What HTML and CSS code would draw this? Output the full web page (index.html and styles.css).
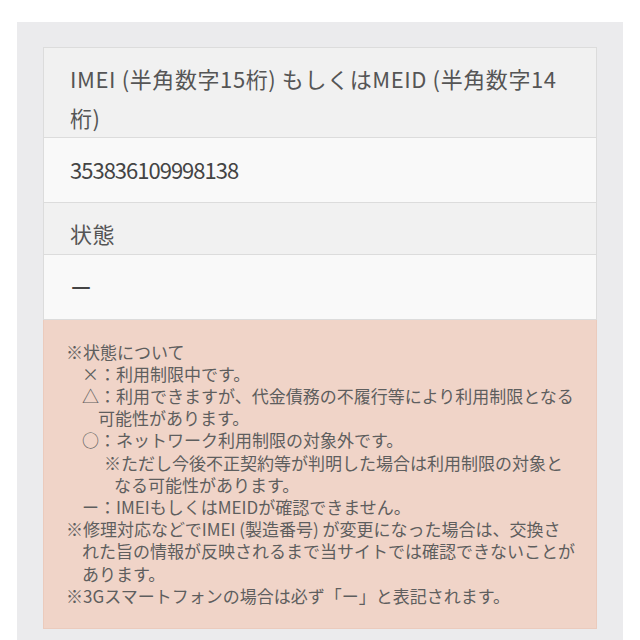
FILE: index.html
```html
<!DOCTYPE html>
<html lang="ja">
<head>
    <meta charset="UTF-8">
    <meta name="viewport" content="width=device-width, initial-scale=1.0">
    <title>ネットワーク利用制限確認</title>
    <link rel="stylesheet" href="styles.css">
</head>
<body>

    <!-- Result panel -->
    <div class="page">
        <div class="panel">
            <div class="result-table">
                <div class="row head">IMEI (半角数字15桁) もしくはMEID (半角数字14<br>桁)</div>
                <div class="row value">353836109998138</div>
                <div class="row head">状態</div>
                <div class="row value">ー</div>
            </div>

            <!-- Notes -->
            <div class="note">
                <p class="lv0">※状態について</p>
                <p class="lv1">×：利用制限中です。</p>
                <p class="lv1">△：利用できますが、代金債務の不履行等により利用制限となる<br><span class="cont1">可能性があります。</span></p>
                <p class="lv1">○：ネットワーク利用制限の対象外です。</p>
                <p class="lv2">※ただし今後不正契約等が判明した場合は利用制限の対象と<br><span class="cont2">なる可能性があります。</span></p>
                <p class="lv1">ー：IMEIもしくはMEIDが確認できません。</p>
                <p class="lv0">※修理対応などでIMEI (製造番号) が変更になった場合は、交換さ<br><span class="cont0">れた旨の情報が反映されるまで当サイトでは確認できないことが</span><br><span class="cont0">あります。</span></p>
                <p class="lv0">※3Gスマートフォンの場合は必ず「ー」と表記されます。</p>
            </div>
        </div>
    </div>

</body>
</html>
```

FILE: styles.css
```css
body {
    margin: 0;
    padding: 0;
    background: #ffffff;
    font-family: "Noto Sans CJK JP", "Noto Sans", sans-serif;
    color: #555;
}
.page {
    padding: 22px 17px 0;
}
.panel {
    background: #ebebed;
    padding: 25px 26px 30px;
}
/* Result table */
.result-table {
    border: 1px solid #dcdcdc;
    border-bottom: none;
}
.row {
    font-size: 22px;
    line-height: 38.5px;
    padding: 0 26px;
    border-bottom: 1px solid #dcdcdc;
}
.row.head {
    background: #f1f1f1;
    padding-top: 11px;
    padding-bottom: 1px;
    color: #555;
    letter-spacing: 0.6px;
}
.row.value {
    background: #f9f9f9;
    padding-top: 12px;
    padding-bottom: 13.5px;
    color: #444;
    letter-spacing: -1px;
}
/* Note box */
.note {
    background: #f0d4c8;
    border: 1px solid #ebcbbd;
    border-top: none;
    padding: 21px 22px 21px;
    font-size: 17px;
    line-height: 22.2px;
    color: #5e5e5e;
    white-space: nowrap;
}
.note p {
    margin: 0;
}
.note .lv0 {
    padding-left: 0;
}
.note .lv1 {
    padding-left: 16px;
}
.note .lv2 {
    padding-left: 38px;
}
.cont0 {
    padding-left: 16px;
}
.cont1 {
    padding-left: 16px;
}
.cont2 {
    padding-left: 10px;
}
```
